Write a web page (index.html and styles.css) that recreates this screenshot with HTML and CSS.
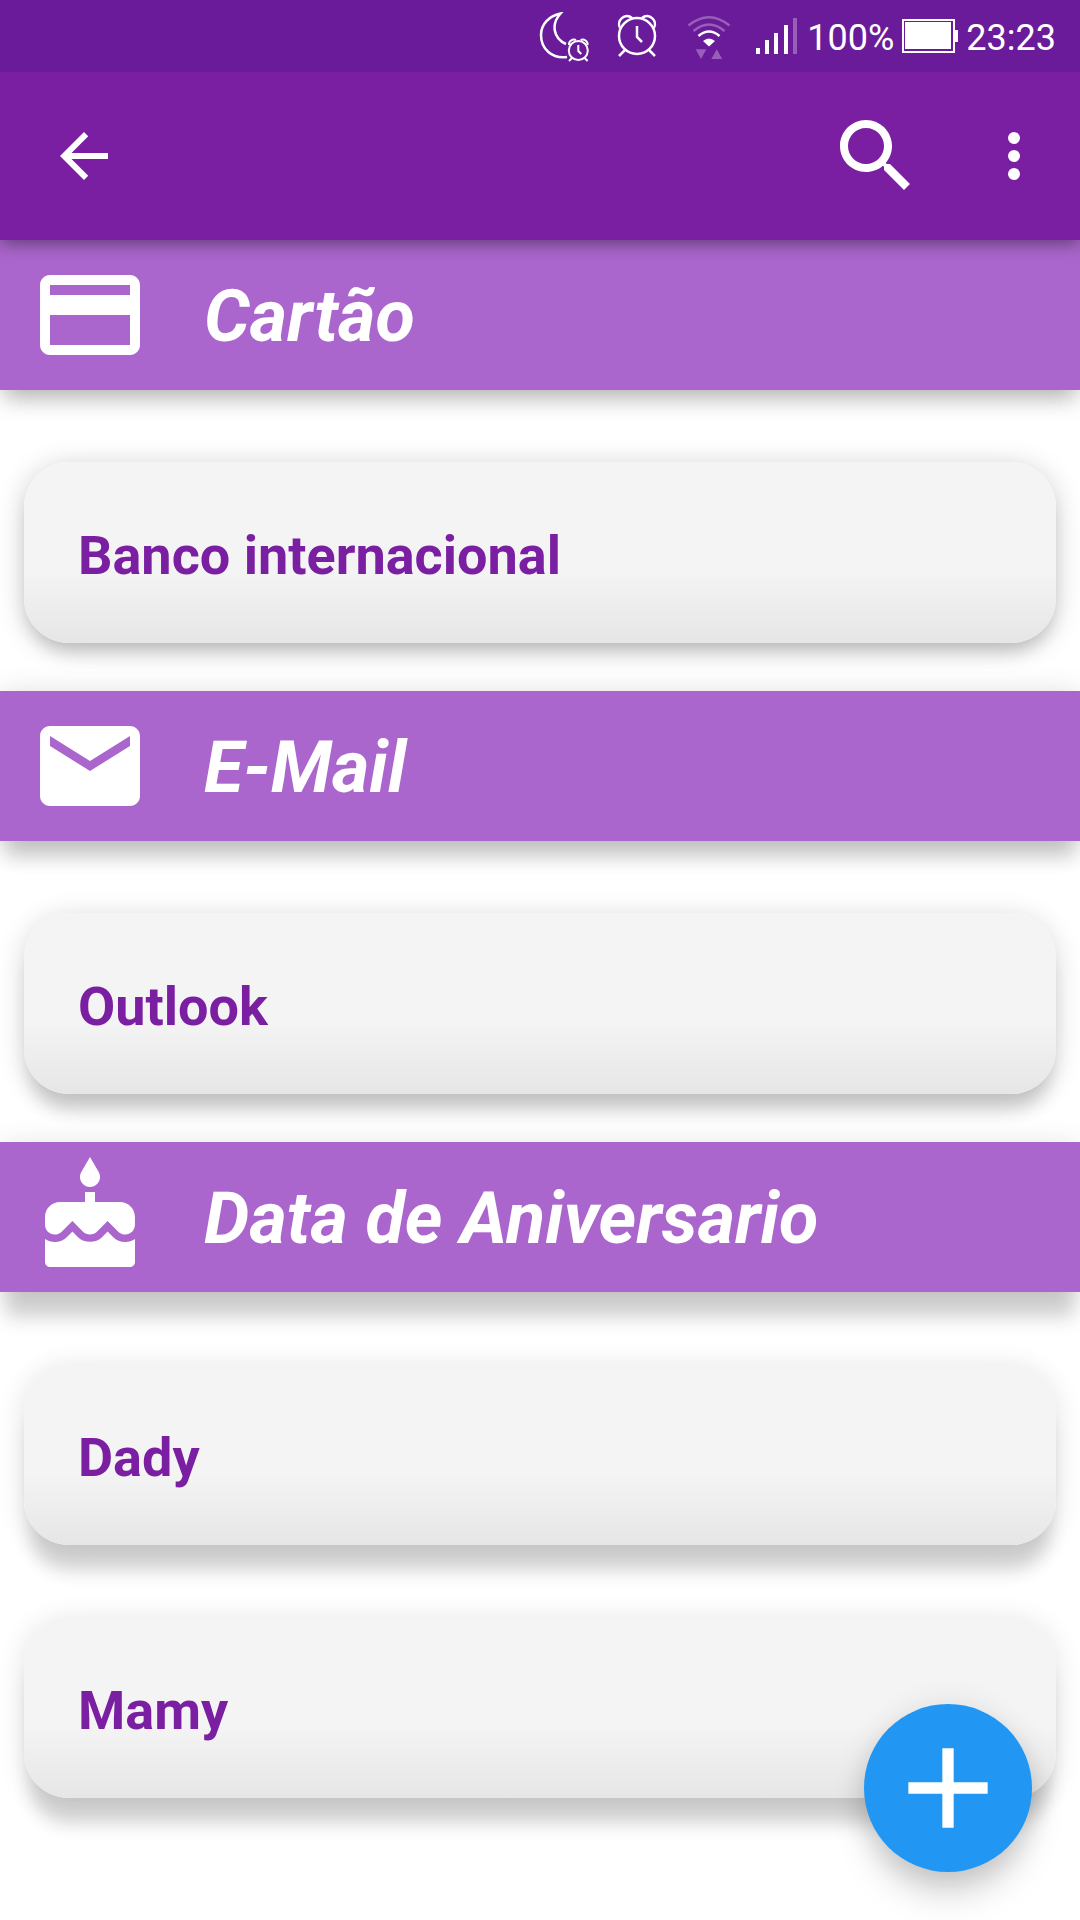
FILE: index.html
```
<!DOCTYPE html>
<html lang="pt">
<head>
  <meta charset="UTF-8" />
  <meta name="viewport" content="width=device-width, initial-scale=1" />
  <title>Lista</title>
  <link rel="stylesheet" href="styles.css">
</head>
<body>
  <div class="status-bar">
    <svg class="moon" width="52" height="52" viewBox="0 0 52 52">
      <path d="M28 45C13 47 2 37 2 23C2 12 10 4 21.500 1.500C12 12 14 26 27 32" />
      <g stroke-width="2">
        <circle cx="39.300" cy="38.500" r="9.500" />
        <path d="M30 33a5 5 0 0 1 7-5M48.600 33a5 5 0 0 0-7-5M39.300 33v6l3 3M33 46l-3 3M45.600 46l3 3" />
      </g>
    </svg>
    <svg class="alarm" width="44" height="52" viewBox="0 0 44 52">
      <circle cx="22" cy="24" r="18" />
      <path d="M5 16C1 9 10 0 17 6M39 16C43 9 34 0 27 6M22 14v11l5 5M10 38l-6 6M34 38l6 6" />
    </svg>
    <svg class="wifi" width="44" height="52" viewBox="0 0 44 52">
      <path class="dim" d="M1.500 13.500Q22-3 42.500 13.500M6.500 19Q22 6 37.500 19" />
      <path d="M11.500 24Q22 15 32.500 24" />
      <path class="fill" d="M16 29q6-5 12 0l-6 5.500z" />
      <path class="fill faded" d="M8.700 37.300h10.600L14 47zM24.300 47h10.900L29.800 37.300z" />
    </svg>
    <svg class="signal" width="44" height="52" viewBox="0 0 44 52">
      <path class="fill" d="M1 36h4v6H1zM10 28h4v14h-4zM19 21h4v21h-4zM29 13h4v29h-4z" />
      <path class="fill faded" d="M38 6h4v36h-4z" />
    </svg>
    <span class="percent">100%</span>
    <svg class="battery" width="56" height="52" viewBox="0 0 56 52">
      <path d="M1 8h51v32H1z" />
      <path class="fill" d="M3 10h46v27H3zM52 18h4v12h-4z" />
    </svg>
    <span class="clock">23:23</span>
  </div>

  <header class="app-bar">
    <button class="icon-btn back" aria-label="Voltar">
      <svg width="72" height="72" viewBox="0 0 24 24"><path d="M20 11H7.830l5.590-5.590L12 4l-8 8 8 8 1.410-1.410L7.830 13H20v-2z" /></svg>
    </button>
    <button class="icon-btn" aria-label="Pesquisar">
      <svg width="96" height="96" viewBox="0 0 24 24"><path d="M15.500 14h-.79l-.28-.27C15.410 12.590 16 11.110 16 9.500 16 5.910 13.090 3 9.500 3S3 5.910 3 9.500 5.910 16 9.500 16c1.610 0 3.090-.59 4.230-1.570l.27.28v.79l5 4.990L20.490 19l-4.990-5zm-6 0C7.010 14 5 11.990 5 9.500S7.010 5 9.500 5 14 7.010 14 9.500 11.990 14 9.500 14z" /></svg>
    </button>
    <button class="icon-btn" aria-label="Mais opções">
      <svg width="72" height="72" viewBox="0 0 24 24"><circle cx="12" cy="6" r="2" /><circle cx="12" cy="12" r="2" /><circle cx="12" cy="18" r="2" /></svg>
    </button>
  </header>

  <main>
    <section class="group low">
      <h2 class="group-title">
        <svg width="120" height="120" viewBox="0 0 24 24"><path d="M20 4H4c-1.110 0-1.990.89-1.990 2L2 18c0 1.110.89 2 2 2h16c1.110 0 2-.89 2-2V6c0-1.110-.89-2-2-2zm0 14H4v-6h16v6zm0-10H4V6h16v2z" /></svg>
        <span>Cartão</span>
      </h2>
      <div class="cards">
        <a class="card" href="#">Banco internacional</a>
      </div>
    </section>

    <section class="group mid">
      <h2 class="group-title">
        <svg width="120" height="120" viewBox="0 0 24 24"><path d="M20 4H4c-1.100 0-1.990.9-1.990 2L2 18c0 1.100.9 2 2 2h16c1.100 0 2-.9 2-2V6c0-1.100-.9-2-2-2zm0 4l-8 5-8-5V6l8 5 8-5v2z" /></svg>
        <span>E-Mail</span>
      </h2>
      <div class="cards">
        <a class="card" href="#">Outlook</a>
      </div>
    </section>

    <section class="group high">
      <h2 class="group-title">
        <svg width="120" height="120" viewBox="0 0 24 24"><path d="M12 6c1.110 0 2-.9 2-2 0-.38-.1-.73-.29-1.030L12 0l-1.710 2.970c-.19.3-.29.65-.29 1.030 0 1.100.9 2 2 2zm4.600 9.990l-1.070-1.070-1.080 1.070c-1.300 1.300-3.580 1.310-4.890 0l-1.070-1.070-1.090 1.070C6.750 16.640 5.880 17 4.960 17c-.73 0-1.400-.23-1.960-.61V21c0 .55.450 1 1 1h16c.55 0 1-.45 1-1v-4.610c-.56.38-1.230.61-1.960.61-.92 0-1.790-.36-2.440-1.010zM18 9h-5V7h-2v2H6c-1.660 0-3 1.340-3 3v1.540c0 1.080.88 1.960 1.960 1.960.52 0 1.020-.2 1.380-.57l2.140-2.130 2.130 2.130c.74.74 2.030.74 2.770 0l2.140-2.130 2.130 2.130c.37.37.86.57 1.380.57 1.080 0 1.960-.88 1.960-1.960V12C21 10.340 19.660 9 18 9z" /></svg>
        <span>Data de Aniversario</span>
      </h2>
      <div class="cards">
        <a class="card" href="#">Dady</a>
        <a class="card" href="#">Mamy</a>
      </div>
    </section>
  </main>

  <button class="fab" aria-label="Adicionar">
    <svg width="136" height="136" viewBox="0 0 24 24"><path d="M19 13h-6v6h-2v-6H5v-2h6V5h2v6h6v2z" /></svg>
  </button>
</body>
</html>
```

FILE: styles.css
```
* {
  box-sizing: border-box;
}

body {
  margin: 0;
  background: #fff;
  font-family: Roboto, sans-serif;
  overflow-x: hidden;
}

svg {
  display: block;
  flex: none;
  fill: currentColor;
}

/* status bar */
.status-bar {
  position: relative;
  z-index: 3;
  display: flex;
  align-items: center;
  justify-content: flex-end;
  height: 72px;
  padding: 0 24px;
  background: #6a1b9a;
  color: #fff;
  font-size: 36px;
  line-height: 44px;
}

.status-bar svg {
  fill: none;
  stroke: currentColor;
  stroke-width: 2.5;
  margin-top: 4px;
}

.status-bar .fill {
  fill: currentColor;
  stroke: none;
}

.status-bar .dim,
.status-bar .faded {
  opacity: 0.3;
}

.status-bar .battery {
  stroke-width: 2;
}

.alarm {
  margin-left: 24px;
}

.wifi {
  margin-left: 28px;
}

.signal {
  margin-left: 24px;
}

.percent {
  margin: 4px 8px 0;
}

.clock {
  margin: 4px 0 0 8px;
}

/* app bar */
.app-bar {
  position: relative;
  z-index: 2;
  display: flex;
  align-items: center;
  height: 168px;
  padding: 0 30px 0 48px;
  background: #7b1fa2;
  color: #fff;
  box-shadow: 0 4px 16px rgba(0, 0, 0, 0.4);
}

.icon-btn {
  padding: 0;
  border: none;
  background: none;
  color: inherit;
  cursor: pointer;
}

.icon-btn + .icon-btn {
  margin-left: 54px;
}

.app-bar .back {
  margin-right: auto;
}

/* groups, the shadow gets longer further down the list */
.low {
  --drop: 14px;
  --ambient: 0.2;
}

.mid {
  --drop: 22px;
  --ambient: 0.16;
}

.high {
  --drop: 32px;
  --ambient: 0.12;
}

.group-title,
.card {
  box-shadow:
    0 var(--drop) 18px -6px rgba(0, 0, 0, 0.16),
    0 4px 28px rgba(0, 0, 0, var(--ambient));
}

.group-title {
  display: flex;
  align-items: center;
  gap: 54px;
  margin: 0;
  padding: 15px 30px;
  background: #aa66cc;
  color: #fff;
  font-size: 72px;
  font-style: italic;
  font-weight: 700;
  line-height: 84px;
}

.group-title span {
  padding-top: 4px;
}

.cards {
  display: flex;
  flex-direction: column;
  gap: 72px;
  padding: 72px 24px 48px;
}

.card {
  padding: 62px 54px 55px;
  border-radius: 45px;
  background: linear-gradient(#f4f4f4 60%, #e6e6e6);
  color: #7b1fa2;
  font-size: 54px;
  font-weight: 700;
  line-height: 64px;
  text-decoration: none;
}

/* floating button */
.fab {
  position: fixed;
  right: 48px;
  bottom: 48px;
  z-index: 3;
  display: flex;
  align-items: center;
  justify-content: center;
  width: 168px;
  height: 168px;
  padding: 0;
  border: none;
  border-radius: 50%;
  background: #2196f3;
  color: #fff;
  box-shadow:
    0 24px 36px -4px rgba(0, 0, 0, 0.18),
    0 4px 32px rgba(0, 0, 0, 0.12);
  cursor: pointer;
}
```
